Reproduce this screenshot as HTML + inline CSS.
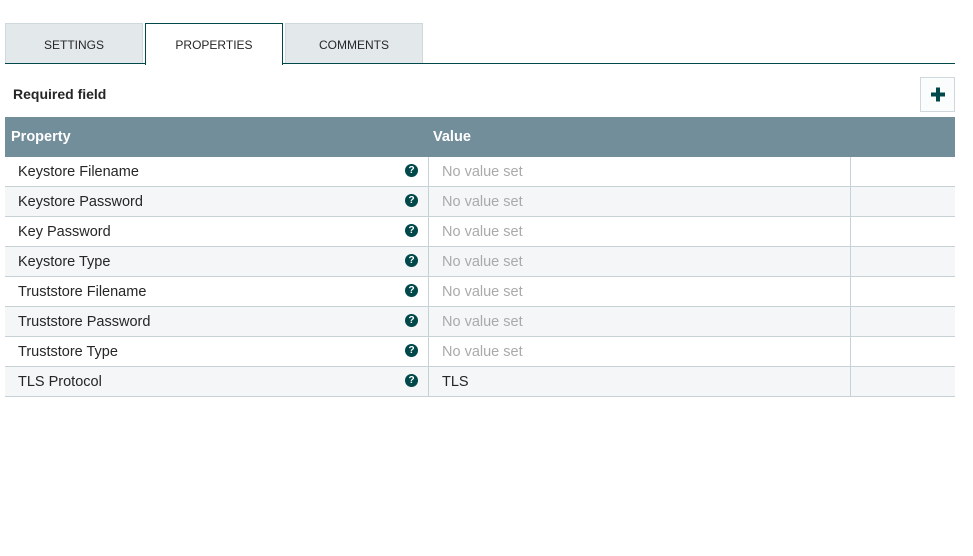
<!DOCTYPE html>
<html><head><style>
body{margin:0;width:973px;height:556px;background:#fff;font-family:"Liberation Sans",sans-serif;position:relative;overflow:hidden}
.tab{position:absolute;top:23px;height:40px;width:136px;background:#e3e8eb;border:1px solid #cfd8dc;border-bottom:none;font-size:12px;color:#262626;text-align:center;line-height:42px}
.tab.a{background:#fff;border:1px solid #004849;border-bottom:none;height:41px;z-index:2}
.line{position:absolute;left:5px;top:63px;width:950px;height:1px;background:#004849}
.req{position:absolute;left:13px;top:86px;font-size:14px;font-weight:bold;color:#262626}
.plus{position:absolute;left:920px;top:77px;width:33px;height:33px;border:1px solid #cfd8dc;background:#fbfcfc}
.hdr{position:absolute;left:5px;top:117px;width:950px;height:40px;background:#728e9b;color:#fff;font-weight:bold;font-size:14.5px}
.row{position:absolute;left:5px;width:950px;height:29px;border-bottom:1px solid #c7d2d7;font-size:14.5px;color:#262626}
.row.o{background:#f4f6f7}
.row span{position:absolute;top:7px}
.c1{left:13px}.c2{left:437px}.nv{color:#aaa}
.d1{position:absolute;left:423px;top:0;width:1px;height:29px;background:#c7d2d7}
.d2{position:absolute;left:845px;top:0;width:1px;height:29px;background:#c7d2d7}
.q{position:absolute;left:400px;top:7px;width:13px;height:13px;border-radius:50%;background:#004849;color:#fff;font-size:10px;font-weight:bold;text-align:center;line-height:13px}
</style></head><body>
<div class="tab" style="left:5px">SETTINGS</div>
<div class="tab a" style="left:145px">PROPERTIES</div>
<div class="tab" style="left:285px">COMMENTS</div>
<div class="line"></div>
<div class="req">Required field</div>
<div class="plus"><svg width="33" height="33"><rect x="10" y="14.5" width="14" height="4" fill="#004849"/><rect x="15" y="9.5" width="4" height="14" fill="#004849"/></svg></div>
<div class="hdr"><span style="position:absolute;left:6px;top:12px">Property</span><span style="position:absolute;left:428px;top:12px">Value</span></div>
<div class="row" style="top:157px"><span class="c1">Keystore Filename</span><div class="q">?</div><div class="d1"></div><span class="c2 nv">No value set</span><div class="d2"></div></div>
<div class="row o" style="top:187px"><span class="c1">Keystore Password</span><div class="q">?</div><div class="d1"></div><span class="c2 nv">No value set</span><div class="d2"></div></div>
<div class="row" style="top:217px"><span class="c1">Key Password</span><div class="q">?</div><div class="d1"></div><span class="c2 nv">No value set</span><div class="d2"></div></div>
<div class="row o" style="top:247px"><span class="c1">Keystore Type</span><div class="q">?</div><div class="d1"></div><span class="c2 nv">No value set</span><div class="d2"></div></div>
<div class="row" style="top:277px"><span class="c1">Truststore Filename</span><div class="q">?</div><div class="d1"></div><span class="c2 nv">No value set</span><div class="d2"></div></div>
<div class="row o" style="top:307px"><span class="c1">Truststore Password</span><div class="q">?</div><div class="d1"></div><span class="c2 nv">No value set</span><div class="d2"></div></div>
<div class="row" style="top:337px"><span class="c1">Truststore Type</span><div class="q">?</div><div class="d1"></div><span class="c2 nv">No value set</span><div class="d2"></div></div>
<div class="row o" style="top:367px"><span class="c1">TLS Protocol</span><div class="q">?</div><div class="d1"></div><span class="c2">TLS</span><div class="d2"></div></div>
</body></html>
